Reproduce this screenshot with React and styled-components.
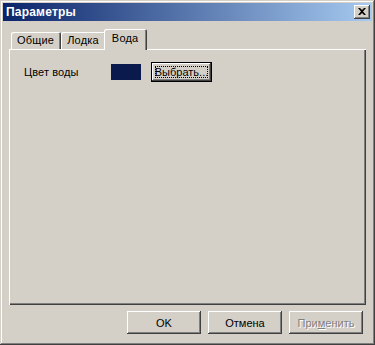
import React, { useState } from "react"
import styled, { createGlobalStyle, css } from "styled-components"

const GlobalStyle = createGlobalStyle`
  html, body {
    margin: 0;
    padding: 0;
    background: #d4d0c8;
  }
  body {
    font-family: "Liberation Sans", Arial, sans-serif;
    font-size: 11px;
    color: #000;
  }
`

const raised = css`
  box-shadow: inset -1px -1px #404040, inset 1px 1px #fff,
    inset -2px -2px #808080, inset 2px 2px #d4d0c8;
`

const Window = styled.div`
  width: 375px;
  height: 345px;
  box-sizing: border-box;
  padding: 3px;
  background: #d4d0c8;
  display: flex;
  flex-direction: column;
  box-shadow: inset -1px -1px #404040, inset 1px 1px #d4d0c8,
    inset -2px -2px #808080, inset 2px 2px #fff;
`

const TitleBar = styled.div`
  height: 18px;
  display: flex;
  align-items: center;
  padding: 0 2px 0 3px;
  background: linear-gradient(to right, #0a246a, #a6caf0);
  color: #fff;
  font-weight: bold;
  font-size: 12px;
  letter-spacing: 0.2px;
`

const Title = styled.span`
  flex: 1;
`

const CloseButton = styled.div`
  width: 16px;
  height: 14px;
  background: #d4d0c8;
  display: flex;
  align-items: center;
  justify-content: center;
  ${raised}
  svg {
    display: block;
    margin-top: -1px;
  }
`

const Body = styled.div`
  flex: 1;
  display: flex;
  flex-direction: column;
  padding: 8px 6px 8px 6px;
`

const TabStrip = styled.div`
  display: flex;
  align-items: flex-end;
  height: 20px;
  padding-left: 2px;
  position: relative;
  z-index: 1;
`

const Tab = styled.div`
  box-sizing: border-box;
  height: ${(p) => (p.$active ? 21 : 17)}px;
  margin: ${(p) => (p.$active ? "0 -2px -1px -2px" : "0")};
  padding: ${(p) => (p.$active ? "3px 9px 0 8px" : "2px 7px 0 6px")};
  background: #d4d0c8;
  border-top-left-radius: 2px;
  border-top-right-radius: 2px;
  position: relative;
  z-index: ${(p) => (p.$active ? 2 : 1)};
  cursor: default;
  letter-spacing: 0.2px;
  box-shadow: inset 1px 1px #fff, inset -1px 0 #404040, inset -2px 0 #808080;
  line-height: 13px;
`

const Panel = styled.div`
  flex: 1;
  box-sizing: border-box;
  padding: 13px 15px;
  box-shadow: inset 1px 1px #fff, inset -1px -1px #404040,
    inset -2px -2px #808080;
`

const Row = styled.div`
  display: flex;
  align-items: center;
  height: 20px;
`

const Label = styled.span`
  width: 87px;
  letter-spacing: 0.1px;
`

const Swatch = styled.div`
  width: 30px;
  height: 16px;
  background: ${(p) => p.$color};
  margin-right: 10px;
`

const Button = styled.button`
  box-sizing: border-box;
  width: ${(p) => p.$width || 74}px;
  height: ${(p) => p.$height || 23}px;
  padding: 0;
  font-family: inherit;
  font-size: 11px;
  background: #d4d0c8;
  border: none;
  color: #000;
  position: relative;
  ${raised}
  ${(p) =>
    p.$default &&
    css`
      box-shadow: inset 0 0 0 1px #000, inset -2px -2px #404040,
        inset 2px 2px #fff, inset -3px -3px #808080;
    `}
  ${(p) =>
    p.$disabled &&
    css`
      color: #808080;
      text-shadow: 1px 1px #fff;
    `}
`

const Focus = styled.span`
  position: absolute;
  left: 4px;
  top: 4px;
  right: 4px;
  bottom: 4px;
  border: 1px dotted #000;
  display: flex;
  align-items: center;
  justify-content: center;
`

const Footer = styled.div`
  display: flex;
  justify-content: flex-end;
  gap: 7px;
  margin-top: 6px;
  padding-right: 3px;
`

const tabs = ["Общие", "Лодка", "Вода"]

export default function App() {
  const [active, setActive] = useState(2)
  return (
    <>
      <GlobalStyle />
      <Window>
        <TitleBar>
          <Title>Параметры</Title>
          <CloseButton>
            <svg width="8" height="7" viewBox="0 0 8 7">
              <path
                d="M0 0h2l2 2 2-2h2L5 3.5 8 7H6L4 5 2 7H0l3-3.5z"
                fill="#000"
              />
            </svg>
          </CloseButton>
        </TitleBar>
        <Body>
          <TabStrip>
            {tabs.map((t, i) => (
              <Tab key={t} $active={i === active} onClick={() => setActive(i)}>
                {t}
              </Tab>
            ))}
          </TabStrip>
          <Panel>
            <Row>
              <Label>Цвет воды</Label>
              <Swatch $color="#0a1a4c" />
              <Button $width={61} $height={20} $default>
                <Focus>Выбрать...</Focus>
              </Button>
            </Row>
          </Panel>
          <Footer>
            <Button>OK</Button>
            <Button>Отмена</Button>
            <Button $disabled>
              При<u>м</u>енить
            </Button>
          </Footer>
        </Body>
      </Window>
    </>
  )
}
